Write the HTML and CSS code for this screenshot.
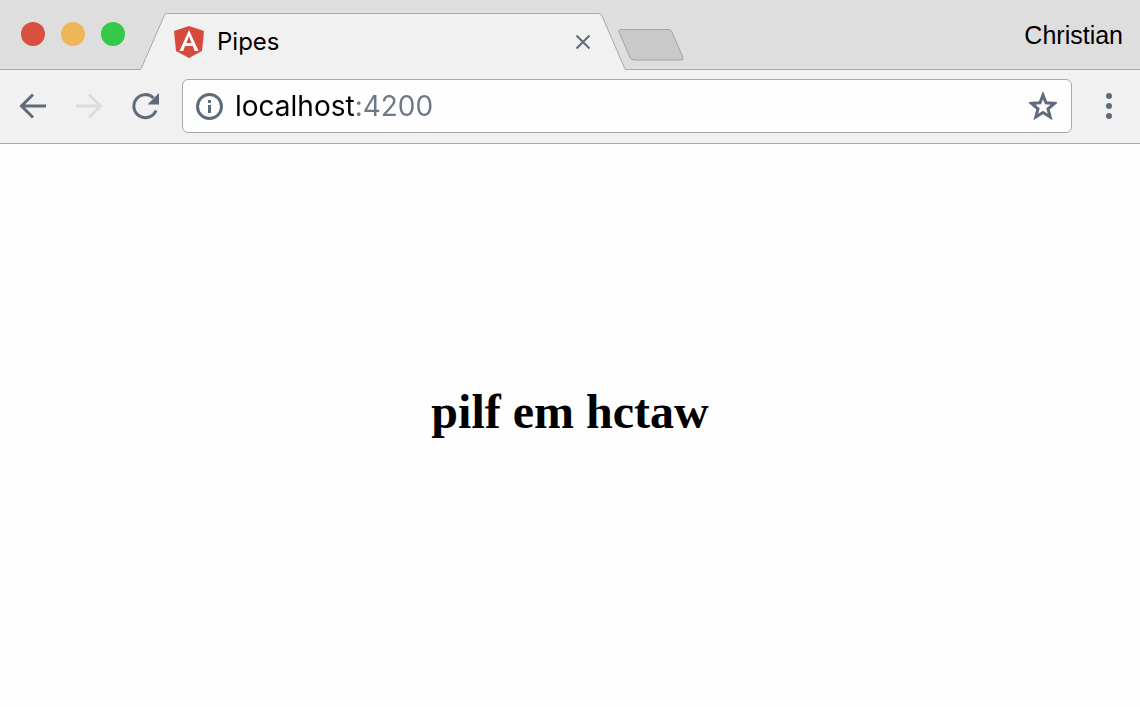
FILE: index.html
```
<!DOCTYPE html>
<html lang="en">
<head>
<meta charset="utf-8">
<title>Pipes</title>
<link rel="stylesheet" href="styles.css">
</head>
<body>
<div class="browser">
  <header class="tabstrip">
    <div class="lights">
      <button class="light light-close" aria-label="Close window"></button>
      <button class="light light-minimize" aria-label="Minimize window"></button>
      <button class="light light-zoom" aria-label="Zoom window"></button>
    </div>
    <div class="tab">
      <svg class="tab-edge" viewBox="0 0 27 57" aria-hidden="true">
        <path class="tab-fill" d="M0 57V56.500Q1 56.500 1.500 55L24 3Q25 .5 26.500 .5H27V57Z"/>
        <path class="tab-line" d="M0 56.500Q1 56.500 1.500 55L24 3Q25 .5 26.500 .5H27"/>
      </svg>
      <div class="tab-body">
        <svg class="tab-icon" viewBox="0 0 30 32" aria-hidden="true">
          <path fill="#d54a3d" d="M15 0L30 5L28 25L15 32L2 25L0 5Z"/>
          <path fill="#fefefe" fill-rule="evenodd" d="M15 4L24.500 25H20.800L18.900 20H11.100L9.200 25H5.500ZM15 10.500L12.300 17H17.700Z"/>
        </svg>
        <span class="tab-title">Pipes</span>
        <button class="tab-close" aria-label="Close tab">
          <svg viewBox="0 0 16 16" aria-hidden="true"><path d="M1.500 1.500L14.500 14.500M14.500 1.500L1.500 14.500"/></svg>
        </button>
      </div>
      <svg class="tab-edge" viewBox="0 0 27 57" aria-hidden="true">
        <path class="tab-fill" d="M27 57V56.500Q26 56.500 25.500 55L3 3Q2 .5 0 .5V57Z"/>
        <path class="tab-line" d="M27 56.500Q26 56.500 25.500 55L3 3Q2 .5 0 .5"/>
      </svg>
    </div>
    <button class="new-tab" aria-label="New tab">
      <svg viewBox="0 0 66 32" aria-hidden="true"><path d="M3 .5H50Q53 .5 54 3L65 28.500Q66 31 63 31H17Q13 31 12 28.500L1 3Q0 .5 3 .5Z"/></svg>
    </button>
    <button class="profile">Christian</button>
  </header>
  <nav class="toolbar" aria-label="Navigation">
    <button class="nav-button" aria-label="Back">
      <svg viewBox="0 0 28 28" aria-hidden="true"><path d="M27 14H3M14 2.500L2.500 14L14 25.500"/></svg>
    </button>
    <button class="nav-button nav-disabled" aria-label="Forward" disabled>
      <svg viewBox="0 0 28 28" aria-hidden="true"><path d="M1 14H25M14 2.500L25.500 14L14 25.500"/></svg>
    </button>
    <button class="nav-button" aria-label="Reload">
      <svg viewBox="0 0 28 28" aria-hidden="true"><path d="M22.500 6A11.500 11.500 0 1 0 25 18.500"/><path class="solid" d="M28 1V12.500H16.500Z"/></svg>
    </button>
    <div class="address">
      <button class="address-button" aria-label="Site information">
        <svg viewBox="0 0 28 28" aria-hidden="true"><circle cx="14.500" cy="14.500" r="12"/><path class="solid" d="M13 8H16V11H13ZM13 13H16V21H13Z"/></svg>
      </button>
      <input class="address-input" type="text" aria-label="Address" value="localhost:4200">
      <button class="address-button" aria-label="Bookmark this page">
        <svg viewBox="0 0 28 28" aria-hidden="true"><path class="star" d="M14 3L17 10.800L25.500 11.400L19 16.800L21.200 25L14 20.500L6.800 25L9 16.800L2.500 11.400L11 10.800Z"/></svg>
      </button>
    </div>
    <button class="menu" aria-label="Menu">
      <svg viewBox="0 0 28 28" aria-hidden="true"><circle class="solid" cx="14" cy="4" r="3"/><circle class="solid" cx="14" cy="14" r="3"/><circle class="solid" cx="14" cy="24" r="3"/></svg>
    </button>
  </nav>
  <main class="page">
    <h1 class="message">pilf em hctaw</h1>
  </main>
</div>
</body>
</html>
```
FILE: styles.css
```
* {
  box-sizing: border-box;
}

body {
  margin: 0;
  color: #000;
  font-family: Inter, "Liberation Sans", sans-serif;
}

button {
  flex: none;
  padding: 0;
  border: 0;
  background: none;
  color: inherit;
  font: inherit;
}

svg {
  display: block;
  fill: none;
  stroke: #5f6b7a;
  stroke-width: 3;
}

.browser {
  display: flex;
  flex-direction: column;
  min-height: 100vh;
  background: #fefefe;
}

.tabstrip {
  display: flex;
  align-items: flex-end;
  height: 70px;
  padding-right: 17px;
  background: linear-gradient(#a9a9ab, #a9a9ab) bottom / 100% 1px no-repeat #dedede;
}

.lights {
  display: flex;
  flex: none;
  gap: 16px;
  align-self: flex-start;
  padding: 22px 15px 0 21px;
}

.light {
  width: 24px;
  height: 24px;
  border-radius: 50%;
}

.light-close {
  background: #d8503f;
}

.light-minimize {
  background: #efb559;
}

.light-zoom {
  background: #35c94a;
}

.tab {
  display: flex;
  flex: 0 1 486px;
  height: 57px;
}

.tab-edge {
  flex: none;
  width: 27px;
  height: 57px;
}

.tab-fill {
  fill: #f1f1f1;
  stroke: none;
}

.tab-line {
  stroke: #a9a9ab;
  stroke-width: 1;
}

.tab-body {
  display: flex;
  flex: 1;
  align-items: center;
  padding: 0 8px 0 7px;
  border-top: 1px solid #a9a9ab;
  background: #f1f1f1;
}

.tab-icon {
  width: 30px;
  height: 32px;
  margin-right: 13px;
  stroke: none;
}

.tab-title {
  flex: 1;
  font-size: 24px;
  line-height: 32px;
}

.tab-close {
  width: 16px;
  height: 16px;
}

.tab-close svg {
  stroke-width: 2;
}

.new-tab {
  align-self: flex-start;
  width: 66px;
  margin: 29px 0 0 -8px;
}

.new-tab path {
  fill: #c9c9ca;
  stroke: #a2a3a6;
  stroke-width: 1;
}

.profile {
  align-self: flex-start;
  margin: 19px 0 0 auto;
  font-family: "Liberation Sans", sans-serif;
  font-size: 25px;
  line-height: 32px;
}

.toolbar {
  display: flex;
  align-items: center;
  height: 74px;
  padding: 0 17px 1px 19px;
  border-bottom: 1px solid #a9a9ab;
  background: #f1f1f1;
}

.nav-button {
  width: 28px;
  margin-right: 28px;
}

.nav-button:nth-of-type(3) {
  margin-right: 23px;
}

.nav-disabled svg {
  stroke: #dcdcdc;
}

.solid {
  fill: #5f6b7a;
  stroke: none;
}

.address {
  display: flex;
  flex: 1;
  gap: 12px;
  align-items: center;
  height: 54px;
  min-width: 0;
  padding: 0 14px 0 12px;
  border: 1px solid #a9a9ab;
  border-radius: 6px;
  background: #fefefe;
}

.address-button {
  width: 28px;
}

.star {
  stroke-width: 3;
}

.address-input {
  flex: 1;
  min-width: 0;
  height: 40px;
  padding: 0;
  border: 0;
  outline: 0;
  background: linear-gradient(to right, #000 121px, #6c7886 121px);
  background-clip: text;
  color: transparent;
  font-family: Inter, "Liberation Sans", sans-serif;
  font-size: 28px;
}

.menu {
  width: 28px;
  margin-left: 23px;
}

.page {
  display: grid;
  flex: 1;
  place-items: center;
  padding-bottom: 28px;
}

.message {
  margin: 0;
  font: bold 48px/56px "Liberation Serif", serif;
}
```
